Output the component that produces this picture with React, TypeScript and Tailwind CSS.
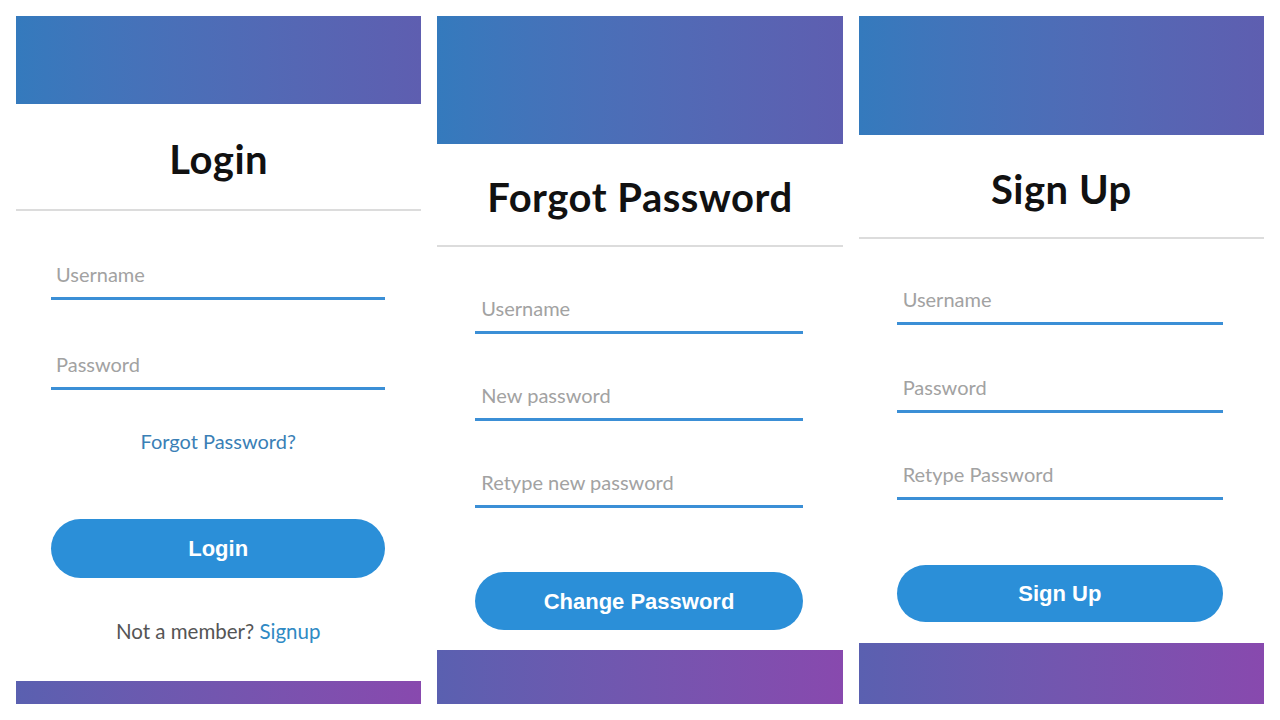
const body = "font-['Lato',sans-serif]";

type Field = { placeholder: string; mt: string };

function Input({ placeholder, mt, pl }: { placeholder: string; mt: string; pl: string }) {
  return (
    <input
      type="text"
      placeholder={placeholder}
      className={`${mt} ${pl} block w-full h-[44px] pb-[5px] border-b-[3px] border-[#3b8fd6] bg-transparent outline-none text-[20px] ${body} text-[#444] placeholder:text-[#a2a2a2]`}
    />
  );
}

function Title({ text, h }: { text: string; h: string }) {
  return (
    <div
      className={`${h} flex items-center justify-center pt-[5px] border-b-2 border-[#dcdcdc]`}
    >
      <h1 className={`${body} text-[40px] font-bold leading-none tracking-[0.5px] text-[#111]`}>{text}</h1>
    </div>
  );
}

function Button({ label, h, mt }: { label: string; h: string; mt: string }) {
  return (
    <button
      className={`${mt} ${h} w-full rounded-full bg-[#2b8fd8] text-white text-[22px] font-bold font-['Liberation_Sans',Arial,sans-serif]`}
    >
      {label}
    </button>
  );
}

function LoginCard() {
  return (
    <div className="flex-1 flex flex-col bg-white">
      <div className="h-[88px] bg-linear-to-r from-[#347abd] to-[#5e5eb0]" />
      <Title text="Login" h="h-[107px]" />
      <div className="flex-1 flex flex-col pl-[35px] pr-[36px]">
        <Input placeholder="Username" mt="mt-[45px]" pl="pl-[5px]" />
        <Input placeholder="Password" mt="mt-[46px]" pl="pl-[5px]" />
        <div className={`mt-[39px] h-[24px] leading-[24px] text-center text-[20px] text-[#3a7fb6] ${body}`}>
          Forgot Password?
        </div>
        <Button label="Login" h="h-[59px]" mt="mt-[66px]" />
        <div className={`mt-[41px] h-[24px] leading-[24px] text-center text-[20.5px] text-[#555] ${body}`}>
          Not a member? <span className="text-[#2f8ac4]">Signup</span>
        </div>
      </div>
      <div className="h-[23px] bg-linear-to-r from-[#5a60b0] to-[#8849ae]" />
    </div>
  );
}

function ForgotCard() {
  const fields: Field[] = [
    { placeholder: "Username", mt: "mt-[43px]" },
    { placeholder: "New password", mt: "mt-[43px]" },
    { placeholder: "Retype new password", mt: "mt-[43px]" },
  ];
  return (
    <div className="flex-1 flex flex-col bg-white">
      <div className="h-[128px] bg-linear-to-r from-[#347abd] to-[#5e5eb0]" />
      <Title text="Forgot Password" h="h-[103px]" />
      <div className="flex-1 flex flex-col pl-[38px] pr-[40px]">
        {fields.map((f) => (
          <Input key={f.placeholder} placeholder={f.placeholder} mt={f.mt} pl="pl-[6px]" />
        ))}
        <Button label="Change Password" h="h-[58px]" mt="mt-[64px]" />
      </div>
      <div className="h-[54px] bg-linear-to-r from-[#5a60b0] to-[#8849ae]" />
    </div>
  );
}

function SignupCard() {
  const fields: Field[] = [
    { placeholder: "Username", mt: "mt-[42px]" },
    { placeholder: "Password", mt: "mt-[44px]" },
    { placeholder: "Retype Password", mt: "mt-[43px]" },
  ];
  return (
    <div className="flex-1 flex flex-col bg-white">
      <div className="h-[119px] bg-linear-to-r from-[#347abd] to-[#5e5eb0]" />
      <Title text="Sign Up" h="h-[104px]" />
      <div className="flex-1 flex flex-col pl-[38px] pr-[41px]">
        {fields.map((f) => (
          <Input key={f.placeholder} placeholder={f.placeholder} mt={f.mt} pl="pl-[6px]" />
        ))}
        <Button label="Sign Up" h="h-[57px]" mt="mt-[65px]" />
      </div>
      <div className="h-[61px] bg-linear-to-r from-[#5a60b0] to-[#8849ae]" />
    </div>
  );
}

export default function App() {
  return (
    <div className="w-[1280px] h-[720px] bg-white flex gap-4 p-4">
      <LoginCard />
      <ForgotCard />
      <SignupCard />
    </div>
  );
}
